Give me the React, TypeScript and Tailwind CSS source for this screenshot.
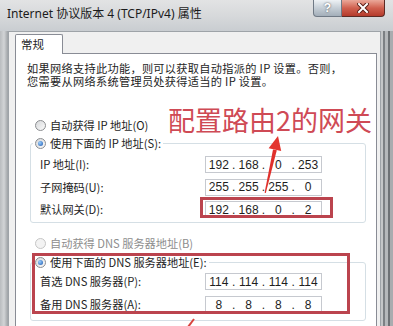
import { Fragment } from "react";

const Radio = ({ checked, disabled }: { checked?: boolean; disabled?: boolean }) => (
  <span
    className={`inline-flex size-[11px] shrink-0 items-center justify-center rounded-full border ${
      disabled
        ? "border-[#c6c6c6] bg-[#f3f3f3]"
        : "border-[#8b8d90] bg-gradient-to-br from-[#d6d8da] to-[#fbfbfb]"
    }`}
  >
    {checked && (
      <span className="size-[5px] rounded-full bg-[radial-gradient(circle_at_35%_35%,#9cd0ff,#1a56ad)]" />
    )}
  </span>
);

const IpBox = ({ parts }: { parts: string[] }) => (
  <div className="flex h-[17px] w-[117px] items-center border border-[#c6c9cf] bg-white font-['Liberation_Sans',sans-serif] text-[12px] leading-none text-[#1e1e1e]">
    {parts.map((p, i) => (
      <Fragment key={i}>
        {i > 0 && <span className="w-[4px] text-center">.</span>}
        <span className="flex-1 text-center">{p}</span>
      </Fragment>
    ))}
  </div>
);

const Row = ({ label, parts }: { label: string; parts: string[] }) => (
  <div className="flex h-[17px] items-center">
    <span className="w-[174px] pl-[9px]">{label}</span>
    <IpBox parts={parts} />
  </div>
);

const GroupBox = ({
  label,
  children,
  bottom,
}: {
  label: string;
  children: React.ReactNode;
  bottom: string;
}) => (
  <div className={`ml-[14px] w-[336px] rounded-[3px] border border-[#d5dfe5] ${bottom}`}>
    <div className="-mt-[8px] ml-[2px] flex h-[14px] w-fit items-center gap-[4px] bg-white px-[2px]">
      <Radio checked />
      <span>{label}</span>
    </div>
    {children}
  </div>
);

export default function App() {
  return (
    <div className="relative flex h-[326px] w-[393px] flex-col overflow-hidden bg-[#cfd2d5] font-['Noto_Sans_CJK_SC',sans-serif] text-[#1e1e1e]">
      {/* title bar */}
      <div className="flex h-[31px] shrink-0 items-start bg-gradient-to-b from-[#e2e3e4] via-[#d7d9db] to-[#c9cdd1] pl-[7px]">
        <span className="pt-[6px] font-['Noto_Sans','Noto_Sans_CJK_SC',sans-serif] text-[12px] leading-[16px] text-[#1b1b1b]">
          Internet 协议版本 4 (TCP/IPv4) 属性
        </span>
        <div className="ml-auto mr-[8px] flex">
          <div className="flex h-[17px] w-[29px] items-center justify-center rounded-bl-[4px] border border-t-0 border-[#6f7985] bg-gradient-to-b from-[#eef2f5] via-[#c5ced6] to-[#a3aeb9] font-['Liberation_Sans',sans-serif] text-[12px] font-bold text-white [text-shadow:0_0_2px_#444]">
            ?
          </div>
          <div className="flex h-[17px] w-[43px] items-center justify-center rounded-br-[4px] border border-l-0 border-t-0 border-[#5c2a24] bg-gradient-to-b from-[#eaa89a] via-[#d0604f] to-[#b43a2b]">
            <svg width="12" height="10" viewBox="0 0 12 10">
              <path d="M2 1 L10 9 M10 1 L2 9" stroke="#5a1f18" strokeWidth="4" strokeLinecap="square" />
              <path d="M2 1 L10 9 M10 1 L2 9" stroke="#fff" strokeWidth="2" strokeLinecap="square" />
            </svg>
          </div>
        </div>
      </div>

      {/* body */}
      <div className="flex shrink-0">
        <div className="w-[8px] shrink-0 bg-gradient-to-r from-[#b9bcbf] via-[#d2d4d6] to-[#9ea2a6]" />
        <div className="flex w-[373px] shrink-0 flex-col border-l border-r border-t border-[#9ea3a8] bg-[#f0f0f0] pl-[6px] pr-[3px] pt-[2px]">
          <div className="relative z-10 -mb-[1px] flex h-[20px] w-[48px] items-center rounded-t-[2px] border border-b-0 border-[#898c95] bg-white pl-[5px] text-[11.5px]">
            常规
          </div>
          <div className="h-[290px] border border-[#898c95] bg-white text-[11.2px]">
            <div className="whitespace-nowrap pl-[11px] pt-[8px] leading-[13px] tracking-[0.3px]">
              <div>如果网络支持此功能，则可以获取自动指派的 IP 设置。否则，</div>
              <div>您需要从网络系统管理员处获得适当的 IP 设置。</div>
            </div>

            <div className="ml-[19px] mt-[30px] flex h-[14px] items-center gap-[4px]">
              <Radio />
              <span>自动获得 IP 地址(O)</span>
            </div>

            <div className="mt-[11px]">
              <GroupBox label="使用下面的 IP 地址(S):" bottom="pb-[4px]">
                <div className="mt-[6px] flex flex-col gap-[5.5px]">
                  <Row label="IP 地址(I):" parts={["192", "168", "0", "253"]} />
                  <Row label="子网掩码(U):" parts={["255", "255", "255", "0"]} />
                  <Row label="默认网关(D):" parts={["192", "168", "0", "2"]} />
                </div>
              </GroupBox>
            </div>

            <div className="ml-[19px] mt-[13px] flex h-[14px] items-center gap-[4px] text-[#8d8d8d]">
              <Radio disabled />
              <span>自动获得 DNS 服务器地址(B)</span>
            </div>

            <div className="mt-[12px]">
              <GroupBox label="使用下面的 DNS 服务器地址(E):" bottom="pb-[7px]">
                <div className="mt-[4px] flex flex-col gap-[6px]">
                  <Row label="首选 DNS 服务器(P):" parts={["114", "114", "114", "114"]} />
                  <Row label="备用 DNS 服务器(A):" parts={["8", "8", "8", "8"]} />
                </div>
              </GroupBox>
            </div>
          </div>
        </div>
        <div className="w-[12px] shrink-0 bg-[linear-gradient(90deg,#c4c6c8_0,#c4c6c8_2px,#7c8084_2px,#7c8084_4px,#b5b8bb_4px,#b5b8bb_7px,#6d7175_7px,#6d7175_9px,#a9acaf_9px)]" />
      </div>

      {/* annotations */}
      <span className="absolute left-[168px] top-[106px] whitespace-nowrap text-[27px] leading-none text-[#cf4a55]">
        配置路由2的网关
      </span>
      <div className="absolute left-[200px] top-[197px] h-[21px] w-[133px] border-[3px] border-[#bb444e]" />
      <div className="absolute left-[32px] top-[253px] h-[61px] w-[318px] border-[3px] border-[#bb444e]" />
      <svg className="pointer-events-none absolute inset-0" width="393" height="326">
        <polygon
          points="265.8,193 264.6,192.8 273,149.5 276.8,150.3"
          fill="#e0302c"
        />
        <polygon points="278,136 268.6,148.2 281.2,151" fill="#e3352f" />
        <line x1="188" y1="327" x2="194" y2="319" stroke="#d8453e" strokeWidth="2" />
      </svg>
    </div>
  );
}
